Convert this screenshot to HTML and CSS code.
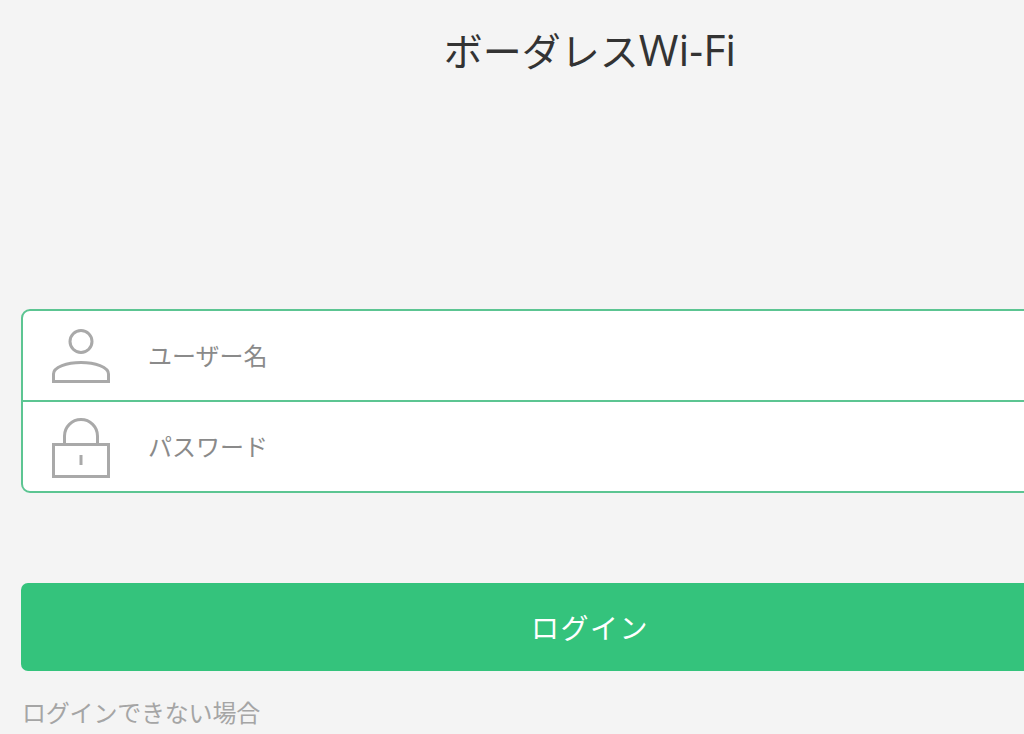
FILE: index.html
```html
<!DOCTYPE html>
<html lang="ja">
<head>
<meta charset="utf-8">
<title>ボーダレスWi-Fi</title>
<link rel="stylesheet" href="styles.css">
</head>
<body>
<main class="page">
  <h1 class="title">ボーダレス<span class="title-latin">Wi-Fi</span></h1>
  <form class="fields">
    <div class="field">
      <svg class="icon" viewBox="0 0 60 60" aria-hidden="true">
        <circle cx="30" cy="15.5" r="11"/>
        <path d="M2.5 55.5V48C2.5 41 16 36.5 30 36.5S57.5 41 57.5 48V55.5Z"/>
      </svg>
      <span class="placeholder">ユーザー名</span>
    </div>
    <div class="field field-last">
      <svg class="icon icon-lock" viewBox="0 0 60 62" aria-hidden="true">
        <path d="M13.5 28.5V20A16.5 16.5 0 0 1 46.5 20V28.5"/>
        <rect x="2.5" y="28.5" width="55" height="32"/>
        <path d="M30 39V49"/>
      </svg>
      <span class="placeholder">パスワード</span>
    </div>
  </form>
  <button class="login" type="button">ログイン</button>
  <a class="help">ログインできない場合</a>
</main>
</body>
</html>
```

FILE: styles.css
```css
html, body {
  margin: 0;
  height: 100%;
  overflow: hidden;
  background: #f4f4f4;
}
body {
  font-family: "Open Sans", "Noto Sans CJK JP", sans-serif;
}
.page {
  width: 1138px;
  margin-left: 21px;
  display: flex;
  flex-direction: column;
}
.title {
  margin: 0;
  padding-top: 23px;
  height: 309px;
  box-sizing: border-box;
  text-align: center;
  font-size: 39px;
  line-height: 54px;
  font-weight: 400;
  color: #333;
}
.title-latin {
  font-size: 43px;
}
.fields {
  margin: 0;
  height: 184px;
  box-sizing: border-box;
  background: #fff;
  border: 2px solid #5cc592;
  border-radius: 9px;
  display: flex;
  flex-direction: column;
}
.field {
  flex: 1;
  display: flex;
  align-items: center;
  padding-left: 28px;
  gap: 37px;
  border-bottom: 2px solid #5cc592;
}
.field-last {
  border-bottom: 0;
}
.icon {
  width: 60px;
  height: 60px;
  flex: none;
  fill: none;
  stroke: #a9a9a9;
  stroke-width: 3;
}
.icon-lock {
  height: 62px;
}
.placeholder {
  font-size: 24px;
  line-height: 30px;
  color: #8a8a8a;
}
.login {
  margin-top: 90px;
  height: 88px;
  border: 0;
  border-radius: 7px;
  background: #34c37c;
  color: #fff;
  font: inherit;
  font-size: 28px;
  letter-spacing: 1.5px;
  padding: 0;
}
.help {
  margin-top: 26px;
  padding-left: 1px;
  font-size: 24px;
  line-height: 32px;
  letter-spacing: -0.2px;
  color: #a5a5a5;
}
```
